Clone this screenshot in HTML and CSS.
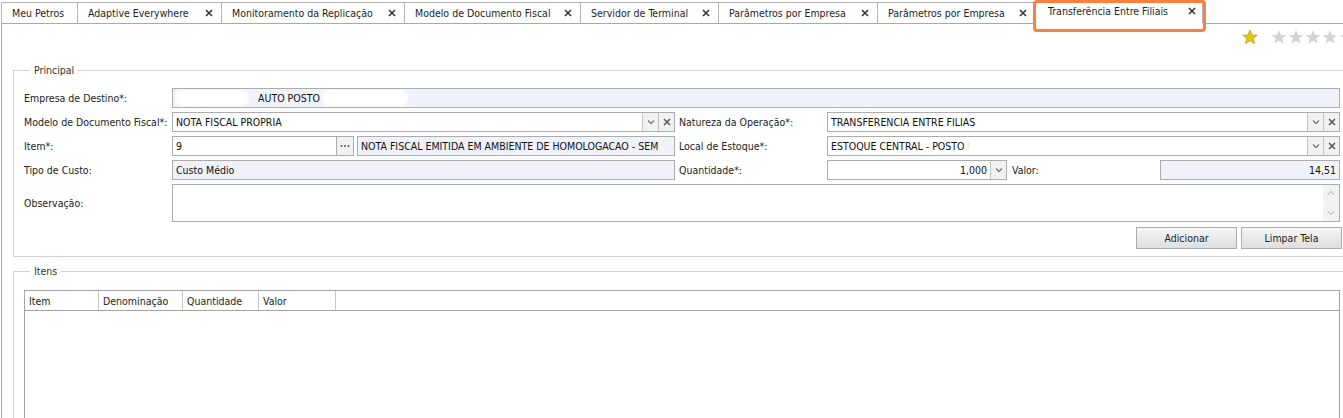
FILE: index.html
```html
<!DOCTYPE html>
<html lang="pt-BR">
<head>
<meta charset="utf-8">
<title>Transferência Entre Filiais</title>
<link rel="stylesheet" href="styles.css">
</head>
<body>
<div class="page">
  <div class="tabbar">
    <div class="tab"><span class="tab-label">Meu Petros</span></div>
    <div class="tab"><span class="tab-label">Adaptive Everywhere</span><svg class="tab-x" viewBox="0 0 8 8"><path d="M1 1L7 7M7 1L1 7"/></svg></div>
    <div class="tab"><span class="tab-label">Monitoramento da Replicação</span><svg class="tab-x" viewBox="0 0 8 8"><path d="M1 1L7 7M7 1L1 7"/></svg></div>
    <div class="tab"><span class="tab-label">Modelo de Documento Fiscal</span><svg class="tab-x" viewBox="0 0 8 8"><path d="M1 1L7 7M7 1L1 7"/></svg></div>
    <div class="tab"><span class="tab-label">Servidor de Terminal</span><svg class="tab-x" viewBox="0 0 8 8"><path d="M1 1L7 7M7 1L1 7"/></svg></div>
    <div class="tab"><span class="tab-label">Parâmetros por Empresa</span><svg class="tab-x" viewBox="0 0 8 8"><path d="M1 1L7 7M7 1L1 7"/></svg></div>
    <div class="tab"><span class="tab-label">Parâmetros por Empresa</span><svg class="tab-x" viewBox="0 0 8 8"><path d="M1 1L7 7M7 1L1 7"/></svg></div>
    <div class="tab tab-active"><span class="tab-label">Transferência Entre Filiais</span><svg class="tab-x" viewBox="0 0 8 8"><path d="M1 1L7 7M7 1L1 7"/></svg><span class="highlight"></span></div>
    <div class="tab-fill"></div>
  </div>

  <div class="content">
    <div class="rating">
      <svg class="star star-on" viewBox="0 0 16 16"><polygon points="8,1 10,6 15.2,6.2 11.1,9.5 12.5,14.6 8,11.7 3.5,14.6 4.9,9.5 0.8,6.2 6,6"/></svg>
      <span class="rating-gap"></span>
      <svg class="star" viewBox="0 0 16 16"><polygon points="8,1 10,6 15.2,6.2 11.1,9.5 12.5,14.6 8,11.7 3.5,14.6 4.9,9.5 0.8,6.2 6,6"/></svg>
      <svg class="star" viewBox="0 0 16 16"><polygon points="8,1 10,6 15.2,6.2 11.1,9.5 12.5,14.6 8,11.7 3.5,14.6 4.9,9.5 0.8,6.2 6,6"/></svg>
      <svg class="star" viewBox="0 0 16 16"><polygon points="8,1 10,6 15.2,6.2 11.1,9.5 12.5,14.6 8,11.7 3.5,14.6 4.9,9.5 0.8,6.2 6,6"/></svg>
      <svg class="star" viewBox="0 0 16 16"><polygon points="8,1 10,6 15.2,6.2 11.1,9.5 12.5,14.6 8,11.7 3.5,14.6 4.9,9.5 0.8,6.2 6,6"/></svg>
      <svg class="star" viewBox="0 0 16 16"><polygon points="8,1 10,6 15.2,6.2 11.1,9.5 12.5,14.6 8,11.7 3.5,14.6 4.9,9.5 0.8,6.2 6,6"/></svg>
    </div>

    <fieldset class="group group-main">
      <legend>Principal</legend>
      <div class="form">
        <div class="lbl">Empresa de Destino*:</div>
        <div class="field field-ro span3 field-empresa"><span class="redact redact-a"></span><span>AUTO POSTO</span><span class="redact redact-b"></span></div>

        <div class="lbl">Modelo de Documento Fiscal*:</div>
        <div class="combo">
          <div class="combo-text">NOTA FISCAL PROPRIA</div>
          <div class="cbtn"><svg viewBox="0 0 8 8"><path class="chev" d="M1 2.5L4 5.5L7 2.5"/></svg></div>
          <div class="cbtn"><svg viewBox="0 0 8 8"><path class="clr" d="M1 1L7 7M7 1L1 7"/></svg></div>
        </div>
        <div class="lbl lbl-2">Natureza da Operação*:</div>
        <div class="combo">
          <div class="combo-text">TRANSFERENCIA ENTRE FILIAS</div>
          <div class="cbtn"><svg viewBox="0 0 8 8"><path class="chev" d="M1 2.5L4 5.5L7 2.5"/></svg></div>
          <div class="cbtn"><svg viewBox="0 0 8 8"><path class="clr" d="M1 1L7 7M7 1L1 7"/></svg></div>
        </div>

        <div class="lbl">Item*:</div>
        <div class="item-row">
          <div class="field item-code">9</div>
          <div class="ellipsis"><svg viewBox="0 0 10 4"><circle cx="1.5" cy="2" r="0.9"/><circle cx="5" cy="2" r="0.9"/><circle cx="8.5" cy="2" r="0.9"/></svg></div>
          <div class="field field-ro item-desc">NOTA FISCAL EMITIDA EM AMBIENTE DE HOMOLOGACAO - SEM</div>
        </div>
        <div class="lbl lbl-2">Local de Estoque*:</div>
        <div class="combo">
          <div class="combo-text">ESTOQUE CENTRAL - POSTO <span class="faint">!</span></div>
          <div class="cbtn"><svg viewBox="0 0 8 8"><path class="chev" d="M1 2.5L4 5.5L7 2.5"/></svg></div>
          <div class="cbtn"><svg viewBox="0 0 8 8"><path class="clr" d="M1 1L7 7M7 1L1 7"/></svg></div>
        </div>

        <div class="lbl">Tipo de Custo:</div>
        <div class="field field-ro">Custo Médio</div>
        <div class="lbl lbl-2">Quantidade*:</div>
        <div class="qty-row">
          <div class="combo combo-qty">
            <div class="combo-text num">1,000</div>
            <div class="cbtn"><svg viewBox="0 0 8 8"><path class="chev" d="M1 2.5L4 5.5L7 2.5"/></svg></div>
          </div>
          <div class="lbl lbl-valor">Valor:</div>
          <div class="field field-ro num valor">14,51</div>
        </div>

        <div class="lbl lbl-obs">Observação:</div>
        <div class="memo span3">
          <div class="memo-text"></div>
          <div class="scroll">
            <svg viewBox="0 0 8 8"><path class="sarrow" d="M1 5.5L4 2.5L7 5.5"/></svg>
            <svg viewBox="0 0 8 8"><path class="sarrow" d="M1 2.5L4 5.5L7 2.5"/></svg>
          </div>
        </div>
      </div>
      <div class="actions">
        <button class="btn" type="button">Adicionar</button>
        <button class="btn" type="button">Limpar Tela</button>
      </div>
    </fieldset>

    <fieldset class="group group-items">
      <legend>Itens</legend>
      <div class="grid">
        <div class="grid-head">
          <div class="col col-item">Item</div>
          <div class="col col-den">Denominação</div>
          <div class="col col-qtd">Quantidade</div>
          <div class="col col-val">Valor</div>
          <div class="col-rest"></div>
        </div>
        <div class="grid-body"></div>
      </div>
    </fieldset>
  </div>
</div>
</body>
</html>
```
FILE: styles.css
```css
* { box-sizing: border-box; }
html, body { margin: 0; padding: 0; background: #fff; }
body {
  width: 1343px;
  height: 418px;
  overflow: hidden;
  font-family: "DejaVu Sans Condensed", "DejaVu Sans", sans-serif;
  font-stretch: condensed;
  font-size: 10.5px;
  color: #222;
}
.page { padding-left: 1px; }

/* tabs */
.tabbar {
  display: flex;
  height: 24px;
  padding-top: 2px;
}
.tab {
  position: relative;
  display: flex;
  align-items: center;
  height: 22px;
  padding-left: 10px;
  border-top: 1px solid #b4b4b4;
  border-right: 1px solid #b4b4b4;
  border-bottom: 1px solid #a9a9a9;
  background: #fff;
  color: #1e1e1e;
  white-space: nowrap;
}
.tab:first-child { border-left: 1px solid #b4b4b4; }
.tab:nth-child(1) { width: 77px; }
.tab:nth-child(2) { width: 144px; }
.tab:nth-child(3) { width: 183px; }
.tab:nth-child(4) { width: 176px; }
.tab:nth-child(5) { width: 138px; }
.tab:nth-child(6) { width: 159px; }
.tab:nth-child(7) { width: 158px; }
.tab:nth-child(8) { width: 167px; }
.tab-label { flex: 1; }
.tab-x {
  width: 8px;
  height: 8px;
  margin-right: 8px;
  flex: none;
}
.tab-x path { stroke: #3a3a3a; stroke-width: 1.7; fill: none; }
.tab-active {
  border-top-color: #a9a9a9;
  border-bottom-color: #fff;
  padding-left: 12px;
  margin-top: -2px;
  height: 24px;
  padding-bottom: 3px;
}
.tab-active .tab-x { margin-right: 6px; }
.highlight {
  position: absolute;
  left: -3px;
  top: -1px;
  width: 173px;
  height: 32px;
  border: 3px solid #fd7f3e;
  border-radius: 4px;
  pointer-events: none;
}
.tab-fill {
  flex: 1;
  border-bottom: 1px solid #a9a9a9;
}

/* content */
.content {
  border-left: 1px solid #a9a9a9;
  padding-left: 11px;
  height: 394px;
}
.rating {
  display: flex;
  justify-content: flex-end;
  align-items: center;
  height: 26px;
  margin-right: -12px;
  gap: 1px;
}
.star { width: 16px; height: 16px; }
.star polygon { fill: #d4d4d4; }
.star-on polygon { fill: #e8c412; stroke: #b8940a; stroke-width: 0.7; }
.rating-gap { width: 11px; }

/* fieldsets */
.group {
  margin: 0;
  border: 1px solid #d2d2d2;
  border-right: none;
  padding: 11px 3px 7px 10px;
  min-width: 0;
}
.group legend {
  padding: 0 4px;
  margin-left: 6px;
  line-height: 14px;
  color: #333;
}
.group-main { margin-top: 13px; }
.group-items { margin-top: 7px; padding-top: 12px; padding-bottom: 0; border-bottom: none; }

/* form grid */
.form {
  display: grid;
  grid-template-columns: 148px 503px 152px 513px;
  grid-template-rows: 20px 20px 20px 20px 38px;
  row-gap: 4px;
}
.span3 { grid-column: span 3; }
.lbl {
  display: flex;
  align-items: center;
  white-space: nowrap;
  color: #222;
}
.lbl-2 { padding-left: 4px; }

.field {
  display: flex;
  align-items: center;
  height: 20px;
  border: 1px solid #acacac;
  background: #fff;
  padding-left: 3px;
  white-space: nowrap;
  overflow: hidden;
  color: #111;
}
.field-ro { background: #eff3f9; }
.num { justify-content: flex-end; padding-right: 3px; }
.field-empresa { padding-left: 4px; }
.redact {
  display: inline-block;
  height: 12px;
  background: #fff;
  border-radius: 6px;
  box-shadow: 0 0 3px 2px #fff;
}
.redact-a { width: 70px; margin-right: 11px; }
.redact-b { width: 82px; margin-left: 4px; }

.combo {
  display: flex;
  height: 20px;
  border: 1px solid #acacac;
  background: #fff;
}
.combo-text {
  flex: 1;
  display: flex;
  align-items: center;
  padding-left: 3px;
  white-space: nowrap;
  overflow: hidden;
  color: #111;
}
.faint { color: #f4d9c8; margin-left: 2px; }
.cbtn {
  width: 16px;
  flex: none;
  display: flex;
  align-items: center;
  justify-content: center;
  border-left: 1px solid #c4c4c4;
  background: #f1f1f1;
}
.cbtn svg { width: 8px; height: 8px; }
.chev { stroke: #7a7a7a; stroke-width: 1.3; fill: none; }
.clr { stroke: #5a5a5a; stroke-width: 1.6; fill: none; }

.item-row { display: flex; }
.item-code { width: 165px; }
.ellipsis {
  width: 17px;
  height: 20px;
  border: 1px solid #acacac;
  border-left: none;
  background: #f1f1f1;
  display: flex;
  align-items: center;
  justify-content: center;
}
.ellipsis svg { width: 10px; height: 4px; }
.ellipsis circle { fill: #4a4a4a; }
.item-desc { flex: 1; margin-left: 3px; }

.qty-row { display: flex; }
.combo-qty { width: 180px; }
.combo-qty .combo-text { justify-content: flex-end; padding-right: 3px; }
.lbl-valor { width: 153px; padding-left: 5px; }
.valor { flex: 1; }

.memo {
  display: flex;
  height: 38px;
  border: 1px solid #acacac;
  background: #fff;
}
.memo-text { flex: 1; }
.scroll {
  width: 16px;
  background: #f2f2f2;
  display: flex;
  flex-direction: column;
  justify-content: space-between;
  align-items: center;
  padding: 4px 0;
}
.scroll svg { width: 8px; height: 8px; }
.sarrow { stroke: #c4c4c4; stroke-width: 1.2; fill: none; }

.actions {
  display: flex;
  justify-content: flex-end;
  gap: 4px;
  margin-top: 5px;
  margin-right: -2px;
}
.btn {
  width: 101px;
  height: 22px;
  border: 1px solid #acacac;
  background: linear-gradient(#f6f6f6, #dedede);
  font-family: inherit;
  font-stretch: condensed;
  font-size: 10.5px;
  color: #222;
  padding: 0;
}

/* items grid */
.grid {
  border: 1px solid #a3a3a3;
  border-bottom: none;
  height: 140px;
  background: #fff;
}
.grid-head {
  display: flex;
  height: 20px;
  border-bottom: 1px solid #a3a3a3;
}
.col {
  display: flex;
  align-items: center;
  padding-left: 4px;
  border-right: 1px solid #c6c6c6;
  color: #222;
  white-space: nowrap;
}
.col-item { width: 74px; }
.col-den { width: 84px; }
.col-qtd { width: 76px; }
.col-val { width: 77px; }
.col-rest { flex: 1; }
```
